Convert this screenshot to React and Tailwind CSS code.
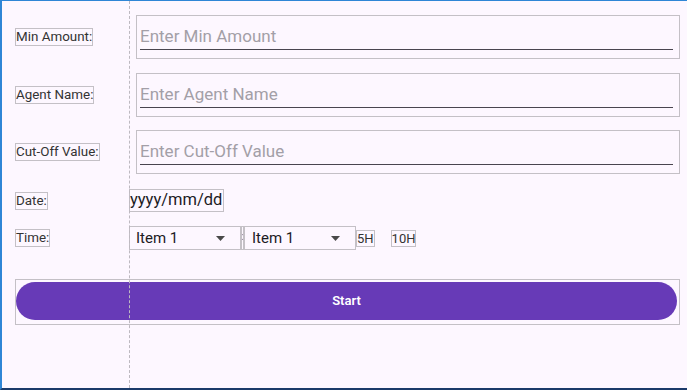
import React from "react";

const font = { fontFamily: "Roboto, 'Noto Sans', sans-serif" };

function Label({ children }) {
  return (
    <div className="w-[114px] shrink-0 flex">
      <span className="border border-[#c4c0c6] text-[13.4px] leading-[16px] text-[#333]">
        {children}
      </span>
    </div>
  );
}

function InputRow({ label, placeholder, className }) {
  return (
    <div className={"flex items-center " + className}>
      <Label>{label}</Label>
      <div className="ml-[7px] flex-1 h-[44px] border border-[#c4c0c6] pl-[3px] pr-[6px] pt-[3px]">
        <div className="h-[31px] border-b border-[#49454f] flex items-center pt-[5px] text-[17px] text-[#a39fa7]">
          {placeholder}
        </div>
      </div>
    </div>
  );
}

function Arrow() {
  return (
    <svg width="9" height="5" viewBox="0 0 9 5" className="shrink-0">
      <path d="M0 0 L9 0 L4.5 5 Z" fill="#494949" />
    </svg>
  );
}

function Dropdown({ className }) {
  return (
    <div
      className={
        "w-[112px] h-[24px] border border-[#c4c0c6] flex items-center justify-between pr-[15px] text-[15px] text-[#1c1b1f] " +
        className
      }
    >
      <span>Item 1</span>
      <Arrow />
    </div>
  );
}

export default function App() {
  return (
    <div
      style={font}
      className="relative w-[687px] h-[390px] overflow-hidden bg-[#fdf7ff] border-t border-t-[#2f86d6] border-l-2 border-l-[#2f86d6] border-b-2 border-b-[#1b3a6a] pl-[13px] pr-[7px] pt-[14px]"
    >
      <InputRow label="Min Amount:" placeholder="Enter Min Amount" className="" />
      <InputRow label="Agent Name:" placeholder="Enter Agent Name" className="mt-[14px]" />
      <InputRow label="Cut-Off Value:" placeholder="Enter Cut-Off Value" className="mt-[13px]" />

      <div className="flex items-center mt-[15px]">
        <Label>Date:</Label>
        <div className="h-[23px] border border-[#c4c0c6] text-[16.5px] leading-[20px] text-[#1c1b1f] pr-[1px]">
          yyyy/mm/dd
        </div>
      </div>

      <div className="flex items-center mt-[14px]">
        <Label>Time:</Label>
        <Dropdown className="pl-[6px]" />
        <div className="w-[3px] h-[24px] border border-[#c4c0c6] text-[10px] leading-[20px] text-[#777] flex justify-center overflow-hidden">
          :
        </div>
        <Dropdown className="pl-[7px]" />
        <span className="border border-[#c4c0c6] text-[13px] leading-[15px] text-[#333] self-center">5H</span>
        <span className="ml-[16px] border border-[#c4c0c6] text-[13px] leading-[15px] text-[#333] self-center">10H</span>
      </div>

      <div className="mt-[29px] h-[46px] border border-[#c4c0c6] pt-[2px] pr-[2px] pb-[4px]">
        <div className="h-full rounded-full bg-[#673ab7] flex items-center justify-center text-white text-[13px] font-semibold">
          Start
        </div>
      </div>

      <div className="absolute left-[127px] top-0 bottom-0 border-l border-dashed border-[#bdb9c0] pointer-events-none" />
    </div>
  );
}
